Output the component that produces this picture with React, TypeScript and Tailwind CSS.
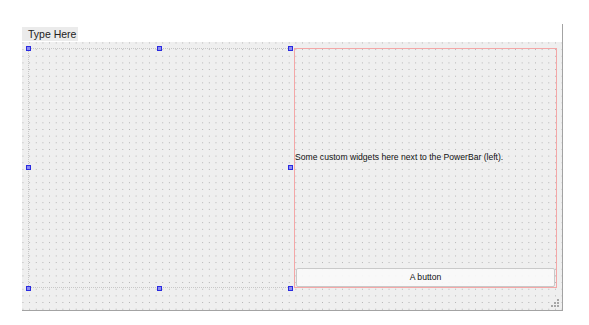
import React from 'react';

const Handle: React.FC<{ x: number; y: number }> = ({ x, y }) => (
  <div
    className="absolute w-[5px] h-[5px] bg-[#8c8cf0] border border-[#2a2ae0]"
    style={{ left: x - 2, top: y - 2 }}
  />
);

const SizeGrip: React.FC = () => (
  <svg width="8" height="8" viewBox="0 0 8 8" className="absolute right-[3px] bottom-[3px]">
    {[
      [6, 0], [6, 3], [3, 3], [6, 6], [3, 6], [0, 6],
    ].map(([x, y], i) => (
      <rect key={i} x={x} y={y} width="2" height="2" fill="#a6a6a6" />
    ))}
  </svg>
);

const App: React.FC = () => {
  const dots =
    'bg-[radial-gradient(circle,#b0b0b0_0.55px,transparent_0.85px)] bg-[size:6.667px_6.667px] bg-[position:-2.4px_-2.4px]';

  return (
    <div className="w-[589px] h-[325px] bg-white relative font-['Liberation_Sans',Arial,sans-serif] text-[#111]">
      <div className="absolute inset-0 pt-[24px] pl-[22px]">
        <div className="w-[541px] h-[287px] flex flex-col border-r border-b border-[#a3a3a3] bg-[#efefef]">
          {/* menu bar */}
          <div className="h-[18px] bg-white flex items-end">
            <div className="h-[14px] w-[56px] bg-[#ebebeb] text-[10.5px] leading-[14px] pl-[6px] mb-[1px] text-[#222]">
              Type Here
            </div>
          </div>

          {/* central widget */}
          <div className={`flex-1 relative bg-[#efefef] ${dots}`}>
            <div className="flex pl-[6px] pt-[6px] h-[246px]">
              <div className="w-[262px] h-full border-l border-t border-b border-dotted border-[#c8c8c8]" />
              <div className="ml-[4px] w-[263px] h-[240px] border border-[#f4a7a7] flex flex-col">
                <div className="flex-1 flex items-center">
                  <span className="text-[8.6px] leading-none mt-[-2px]">
                    Some custom widgets here next to the PowerBar (left).
                  </span>
                </div>
                <button className="mx-[1px] h-[19px] rounded-[2px] border border-[#c9c9c9] bg-[#fafafa]/90 text-[8.6px] text-[#111]">
                  A button
                </button>
              </div>
            </div>

            <Handle x={6} y={6} />
            <Handle x={137} y={6} />
            <Handle x={268} y={6} />
            <Handle x={6} y={125} />
            <Handle x={268} y={125} />
            <Handle x={6} y={246} />
            <Handle x={137} y={246} />
            <Handle x={268} y={246} />

            <SizeGrip />
          </div>
        </div>
      </div>
    </div>
  );
};

export default App;
